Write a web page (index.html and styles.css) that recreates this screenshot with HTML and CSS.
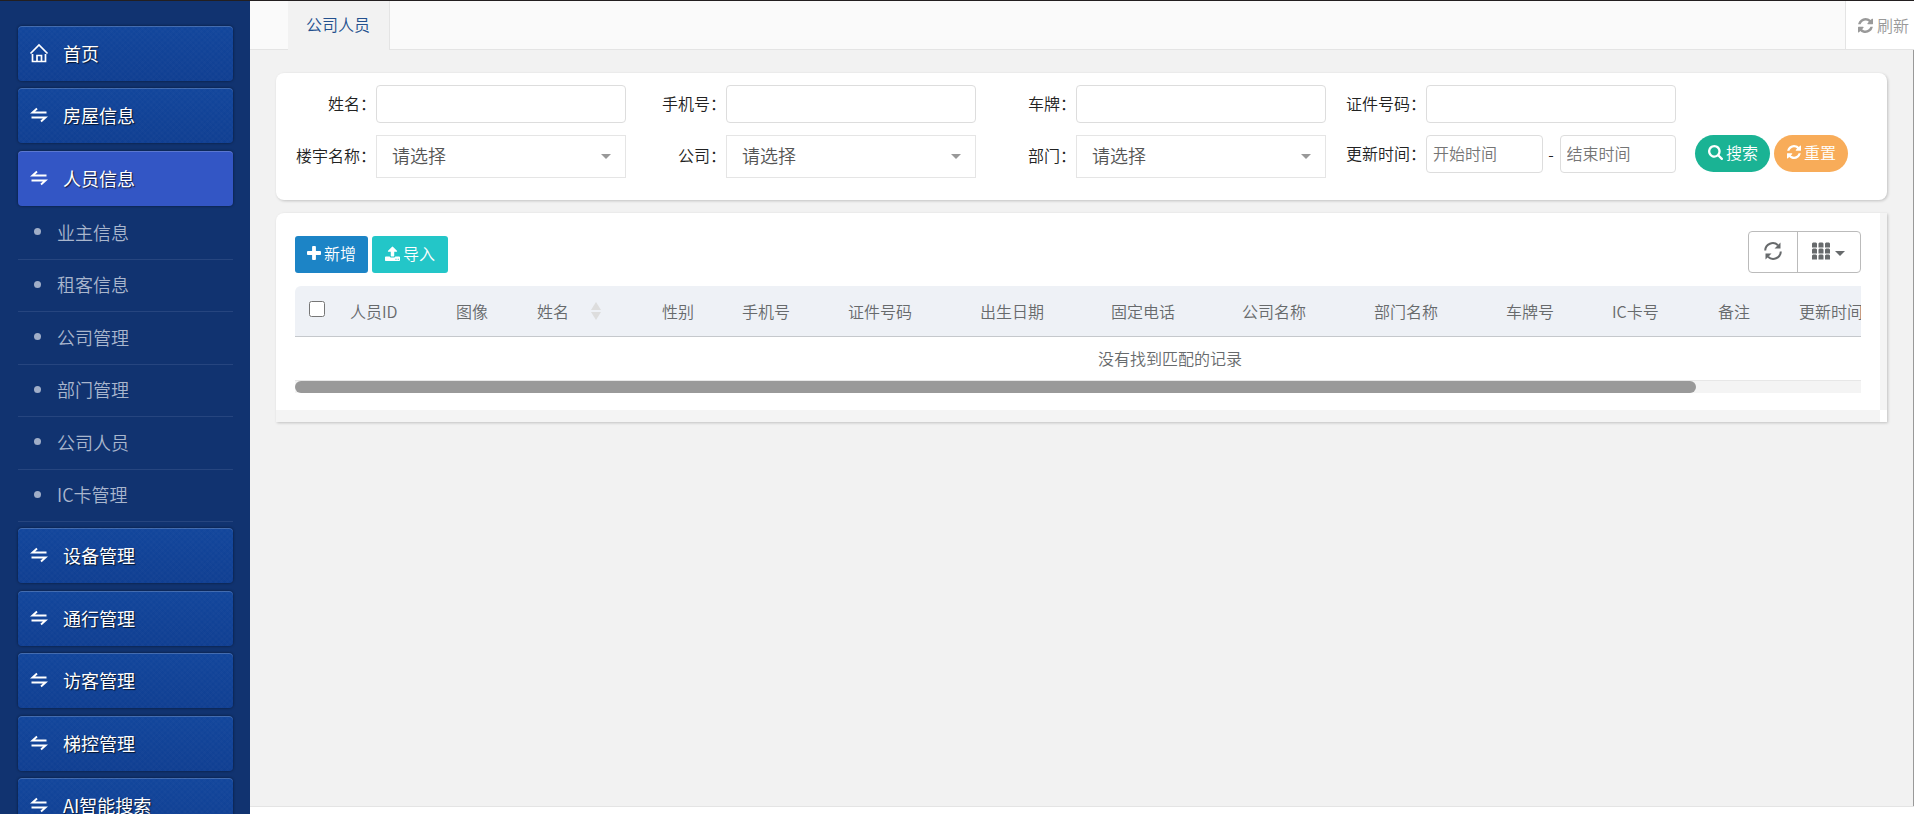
FILE: index.html
```html
<!DOCTYPE html>
<html lang="zh-CN">
<head>
<meta charset="utf-8">
<meta name="viewport" content="width=device-width, initial-scale=1">
<title>公司人员</title>
<link rel="stylesheet" href="styles.css">
</head>
<body>
<svg class="sprite" aria-hidden="true">
  <symbol id="home" viewBox="0 0 20 20"><path d="M1.500 10.500L10 2l8.500 8.500M3.500 11v7.500h13V11M8 18v-5.500h4.500V18" fill="none" stroke="currentColor" stroke-width="1.700"/></symbol>
  <symbol id="swap" viewBox="0 0 20 20"><path d="M17.500 7.500H3.500L8 3.500M2.500 12.500h14L12 16.500" fill="none" stroke="currentColor" stroke-width="1.900"/></symbol>
  <symbol id="refresh" viewBox="0 0 1536 1536"><path fill="currentColor" d="M1511 928q0 5-1 7-64 268-268 434.500t-478 166.500q-146 0-282.500-55t-243.500-157l-129 129q-19 19-45 19t-45-19-19-45v-448q0-26 19-45t45-19h448q26 0 45 19t19 45-19 45l-137 137q71 66 161 102t187 36q134 0 250-65t186-179q11-17 53-117 8-23 30-23h192q13 0 22.500 9.500t9.500 22.500zm25-800v448q0 26-19 45t-45 19h-448q-26 0-45-19t-19-45 19-45l138-138q-148-137-349-137-134 0-250 65t-186 179q-11 17-53 117-8 23-30 23h-199q-13 0-22.500-9.500t-9.500-22.500v-7q65-268 270-434.500t480-166.500q146 0 284 55.500t245 156.500l130-129q19-19 45-19t45 19 19 45z"/></symbol>
  <symbol id="search" viewBox="0 0 1664 1664"><path fill="currentColor" d="M1152 704q0-185-131.500-316.500t-316.500-131.500-316.500 131.500-131.500 316.500 131.500 316.500 316.500 131.500 316.500-131.500 131.500-316.500zm512 832q0 52-38 90t-90 38q-54 0-90-38l-343-342q-179 124-399 124-143 0-273.500-55.500t-225-150-150-225-55.500-273.500 55.500-273.500 150-225 225-150 273.500-55.500 273.500 55.500 225 150 150 225 55.500 273.500q0 220-124 399l343 343q37 37 37 90z"/></symbol>
  <symbol id="plus" viewBox="0 0 1408 1408"><path fill="currentColor" d="M1408 608v192q0 40-28 68t-68 28h-416v416q0 40-28 68t-68 28h-192q-40 0-68-28t-28-68v-416h-416q-40 0-68-28t-28-68v-192q0-40 28-68t68-28h416v-416q0-40 28-68t68-28h192q40 0 68 28t28 68v416h416q40 0 68 28t28 68z"/></symbol>
  <symbol id="upload" viewBox="0 0 1664 1664"><path fill="currentColor" d="M1280 1472q0-26-19-45t-45-19-45 19-19 45 19 45 45 19 45-19 19-45zm256 0q0-26-19-45t-45-19-45 19-19 45 19 45 45 19 45-19 19-45zm128-224v320q0 40-28 68t-68 28h-1472q-40 0-68-28t-28-68v-320q0-40 28-68t68-28h427q21 56 70.500 92t110.500 36h256q61 0 110.500-36t70.500-92h427q40 0 68 28t28 68zm-325-648q-17 40-59 40h-256v448q0 26-19 45t-45 19h-256q-26 0-45-19t-19-45v-448h-256q-42 0-59-40-17-39 14-69l448-448q18-19 45-19t45 19l448 448q31 30 14 69z"/></symbol>
  <symbol id="reload" viewBox="0 0 18 18"><path d="M1.200 8.500A7.600 7.600 0 0 1 14 3.200M16.800 9.500A7.600 7.600 0 0 1 4 14.800" fill="none" stroke="currentColor" stroke-width="2"/><path fill="currentColor" d="M16.500.5V6.500H10.500zM1.500 17.500V11.500H7.500z"/></symbol>
  <symbol id="grid" viewBox="0 0 18 18"><path fill="currentColor" d="M0 5.500V1.500L1 .5h3L5 1.500v4zM6.500 5.500v-4l1-1h3l1 1v4zM13 5.500v-4l1-1h3l1 1v4zM0 11.500v-4l1-1h3l1 1v4zM6.500 11.500v-4l1-1h3l1 1v4zM13 11.500v-4l1-1h3l1 1v4zM0 17.500v-4l1-1h3l1 1v4zM6.500 17.500v-4l1-1h3l1 1v4zM13 17.500v-4l1-1h3l1 1v4z"/></symbol>
</svg>

<div class="app">
  <nav class="sidebar">
    <ul class="menu">
      <li class="menu-item"><a class="menu-link" href="#"><svg class="menu-icon"><use href="#home"/></svg>首页</a></li>
      <li class="menu-item"><a class="menu-link" href="#"><svg class="menu-icon"><use href="#swap"/></svg>房屋信息</a></li>
      <li class="menu-item"><a class="menu-link active" href="#"><svg class="menu-icon"><use href="#swap"/></svg>人员信息</a>
        <ul class="submenu">
          <li><a href="#">业主信息</a></li>
          <li><a href="#">租客信息</a></li>
          <li><a href="#">公司管理</a></li>
          <li><a href="#">部门管理</a></li>
          <li><a href="#">公司人员</a></li>
          <li><a href="#">IC卡管理</a></li>
        </ul>
      </li>
      <li class="menu-item"><a class="menu-link" href="#"><svg class="menu-icon"><use href="#swap"/></svg>设备管理</a></li>
      <li class="menu-item"><a class="menu-link" href="#"><svg class="menu-icon"><use href="#swap"/></svg>通行管理</a></li>
      <li class="menu-item"><a class="menu-link" href="#"><svg class="menu-icon"><use href="#swap"/></svg>访客管理</a></li>
      <li class="menu-item"><a class="menu-link" href="#"><svg class="menu-icon"><use href="#swap"/></svg>梯控管理</a></li>
      <li class="menu-item"><a class="menu-link" href="#"><svg class="menu-icon"><use href="#swap"/></svg>AI智能搜索</a></li>
    </ul>
  </nav>

  <div class="page">
    <header class="tabs">
      <div class="tabs-lead"></div>
      <a class="tab" href="#">公司人员</a>
      <div class="tabs-fill"></div>
      <button class="tabs-refresh" type="button"><svg class="icon"><use href="#refresh"/></svg>刷新</button>
    </header>

    <main class="content">
      <form class="card search">
        <div class="field"><label for="name">姓名：</label><input class="box" id="name" type="text"></div>
        <div class="field"><label for="phone">手机号：</label><input class="box" id="phone" type="text"></div>
        <div class="field"><label for="plate">车牌：</label><input class="box" id="plate" type="text"></div>
        <div class="field"><label for="idno">证件号码：</label><input class="box" id="idno" type="text"></div>
        <div class="field start"><label for="building">楼宇名称：</label><span class="pick"><select id="building"><option>请选择</option></select></span></div>
        <div class="field"><label for="company">公司：</label><span class="pick"><select id="company"><option>请选择</option></select></span></div>
        <div class="field"><label for="dept">部门：</label><span class="pick"><select id="dept"><option>请选择</option></select></span></div>
        <div class="field dates"><label for="from">更新时间：</label><input class="box" id="from" type="text" placeholder="开始时间"><span>-</span><input class="box" type="text" placeholder="结束时间" aria-label="结束时间"></div>
        <div class="actions">
          <button class="pill green" type="button"><svg class="icon"><use href="#search"/></svg>搜索</button>
          <button class="pill orange" type="reset"><svg class="icon small"><use href="#refresh"/></svg>重置</button>
        </div>
      </form>

      <section class="card list">
        <div class="list-body">
          <div class="toolbar">
            <button class="btn blue" type="button"><svg class="icon small"><use href="#plus"/></svg>新增</button>
            <button class="btn teal" type="button"><svg class="icon"><use href="#upload"/></svg>导入</button>
            <div class="group">
              <button type="button" aria-label="刷新"><svg class="icon large"><use href="#reload"/></svg></button>
              <button type="button" aria-label="列"><svg class="icon large"><use href="#grid"/></svg><span class="caret"></span></button>
            </div>
          </div>
          <div class="table-wrap">
            <table>
              <colgroup><col class="c35"><col class="c106"><col class="c81"><col class="c125"><col class="c80"><col class="c106"><col class="c132"><col class="c131"><col class="c131"><col class="c132"><col class="c132"><col class="c106"><col class="c106"><col class="c81"><col></colgroup>
              <thead>
                <tr><th class="check"><input type="checkbox" aria-label="全选"></th><th>人员ID</th><th>图像</th><th><span class="sortable">姓名<span class="sorter"></span></span></th><th>性别</th><th>手机号</th><th>证件号码</th><th>出生日期</th><th>固定电话</th><th>公司名称</th><th>部门名称</th><th>车牌号</th><th>IC卡号</th><th>备注</th><th>更新时间</th></tr>
              </thead>
              <tbody><tr><td colspan="15">没有找到匹配的记录</td></tr></tbody>
            </table>
          </div>
          <div class="bar"><div class="thumb"></div></div>
        </div>
        <div class="track"></div>
        <div class="track"></div>
      </section>
    </main>
    <footer class="foot"></footer>
  </div>
</div>
</body>
</html>
```
FILE: styles.css
```css
* { box-sizing: border-box; }
body {
  margin: 0;
  font: 350 16px/24px "Noto Sans CJK SC", "Noto Sans", sans-serif;
  color: #222;
}
button, input, select { font: inherit; color: inherit; margin: 0; }
button { cursor: pointer; }
a { color: inherit; text-decoration: none; }
ul { list-style: none; margin: 0; padding: 0; }
.sprite { position: absolute; width: 0; height: 0; }
.icon { width: 15px; height: 15px; flex: none; }
.icon.small { width: 14px; height: 14px; }
.icon.large { width: 18px; height: 18px; }

.app {
  display: flex;
  height: 100vh;
  overflow: hidden;
  border-top: 1px solid #231f20;
}

/* Sidebar */
.sidebar {
  flex: 0 0 250px;
  overflow: hidden;
  padding: 25px 17px 0 18px;
  background: #113370;
}
.menu-item { margin-bottom: 7px; }
.menu-item:nth-child(even) { margin-bottom: 8px; }
.menu-link {
  display: flex;
  align-items: center;
  gap: 14px;
  height: 55px;
  padding: 0 0 2px 11px;
  border-radius: 4px;
  font-size: 18px;
  font-weight: 400;
  color: #fff;
  text-shadow: 1px 1px 1px rgba(0, 0, 0, .7);
  background:
    repeating-linear-gradient(45deg, rgba(255, 255, 255, .01) 0 2px, transparent 2px 4px),
    repeating-linear-gradient(-45deg, rgba(255, 255, 255, .01) 0 2px, transparent 2px 4px),
    linear-gradient(#12469c, #103f92);
  box-shadow: inset 0 1px 0 rgba(255, 255, 255, .2), 0 0 2px 1px rgba(0, 0, 0, .25);
}
.menu-link.active { background: #3356c5; }
.menu-icon { width: 20px; height: 20px; flex: none; }
.submenu { margin: 1px 0 -1px; }
.submenu a {
  display: flex;
  align-items: center;
  height: 53px;
  padding: 0 0 3px 16px;
  border-bottom: 1px solid #26457f;
  font-size: 18px;
  color: #a9b6cd;
}
.submenu li:nth-child(even) a { height: 52px; }
.submenu a::before {
  content: "";
  width: 7px;
  height: 7px;
  margin-right: 16px;
  border-radius: 50%;
  background: #a0aec8;
}

/* Tab strip */
.page {
  flex: 1;
  min-width: 0;
  display: flex;
  flex-direction: column;
  background: #f2f2f2;
}
.tabs { display: flex; height: 49px; color: #999; }
.tabs-lead { width: 38px; }
.tabs-fill { flex: 1; }
.tabs-lead, .tabs-fill { background: #fafafa; border-bottom: 1px solid #e4e4e4; }
.tab {
  padding: 11px 19px 0 18px;
  border-right: 1px solid #e4e4e4;
  color: #23508e;
}
.tabs-refresh {
  display: flex;
  align-items: center;
  gap: 4px;
  padding: 0 5px 0 12px;
  border: 0;
  border-left: 1px solid #e4e4e4;
  border-bottom: 1px solid #e4e4e4;
  background: #fff;
}

/* Content */
.content {
  flex: 1;
  min-height: 0;
  padding: 23px 26px 0;
  border-right: 1px solid #999;
}
.foot { height: 8px; border-top: 1px solid #e4e4e4; background: #fff; }
.card {
  border-radius: 8px;
  background: #fff;
  box-shadow: 1px 1px 3px rgba(0, 0, 0, .2);
}
.search {
  display: grid;
  grid-template-columns: repeat(4, 330px) 1fr;
  gap: 12px 20px;
  align-items: start;
  padding: 12px 20px 22px;
}
.field { display: flex; align-items: center; }
.field.start { grid-column: 1; }
.field label {
  display: flex;
  justify-content: flex-end;
  flex: 0 0 80px;
  padding-bottom: 3px;
  white-space: nowrap;
}
.box {
  flex: 1;
  min-width: 0;
  height: 38px;
  padding: 0 6px 2px;
  border: 1px solid #ddd;
  border-radius: 4px;
  background: #fff;
}
.box::placeholder { color: #757575; opacity: 1; }
.dates span { width: 17px; text-align: center; }
.pick { position: relative; flex: 1; display: flex; }
.pick select {
  width: 100%;
  height: 43px;
  padding: 0 15px 3px;
  border: 1px solid #e5e5e5;
  border-radius: 0;
  appearance: none;
  background: #fff;
  font-size: 18px;
  color: #555;
}
.pick::after {
  content: "";
  position: absolute;
  right: 15px;
  top: 19px;
  border: 5px solid transparent;
  border-top-color: #999;
  border-bottom: 0;
  pointer-events: none;
}
.actions { display: flex; gap: 4px; margin-left: -1px; }
.pill, .btn {
  display: flex;
  align-items: center;
  justify-content: center;
  gap: 3px;
  height: 37px;
  border: 0;
  color: #fff;
}
.pill { padding: 0 12px 3px 13px; border-radius: 19px; }
.green { background: #1ab394; }
.orange { background: #f8ac59; }

/* List */
.list {
  display: grid;
  grid-template-columns: minmax(0, 1fr) 7px;
  grid-template-rows: auto 12px;
  margin-top: 13px;
  border-radius: 8px 0 0 0;
  overflow: hidden;
}
.list-body { padding: 18px 19px 17px; color: #676a6c; }
.track { background: #f4f4f4; }
.toolbar { display: flex; align-items: flex-end; gap: 4px; margin-bottom: 13px; }
.btn { padding: 0 12px 3px; border-radius: 3px; }
.blue { background: #1c84c6; }
.teal { padding: 0 13px 3px; background: #23c6c8; }
.group {
  display: flex;
  height: 42px;
  margin-left: auto;
  border: 1px solid #bbb;
  border-radius: 4px;
}
.group button {
  display: flex;
  align-items: center;
  gap: 5px;
  padding: 0 15px 3px 14px;
  border: 0;
  background: none;
}
.group button:first-child { padding-left: 15px; }
.group button + button { border-left: 1px solid #bbb; }
.caret { margin-top: 6px; border: 5px solid transparent; border-top-color: #676a6c; border-bottom: 0; }
.table-wrap { overflow: hidden; }
table {
  width: 1750px;
  table-layout: fixed;
  border-collapse: separate;
  border-spacing: 0;
}
th {
  height: 51px;
  padding: 0 0 0 20px;
  border-bottom: 1px solid #c5c8cc;
  background: #eef1f6;
  font-weight: 350;
  text-align: left;
  white-space: nowrap;
}
th:first-child { border-radius: 6px 0 0 0; }
th.check { padding: 0 0 4px 14px; line-height: 0; }
th input { width: 16px; height: 16px; vertical-align: 3px; }
td { height: 44px; padding: 0 0 2px; border-bottom: 1px solid #e7e7e7; text-align: center; }
.c35 { width: 35px; }
.c80 { width: 80px; }
.c81 { width: 81px; }
.c106 { width: 106px; }
.c125 { width: 125px; }
.c131 { width: 131px; }
.c132 { width: 132px; }
.sortable { display: flex; align-items: center; gap: 22px; }
.sorter { display: flex; flex-direction: column; gap: 2px; }
.sorter::before, .sorter::after { content: ""; border: 5px solid transparent; }
.sorter::before { border-top: 0; border-bottom: 8px solid #ddd; }
.sorter::after { border-bottom: 0; border-top: 8px solid #ddd; }
.bar { height: 12px; background: #f4f4f4; }
.thumb { width: calc(100% * 17 / 19); height: 12px; border-radius: 6px; background: #999; }
```
